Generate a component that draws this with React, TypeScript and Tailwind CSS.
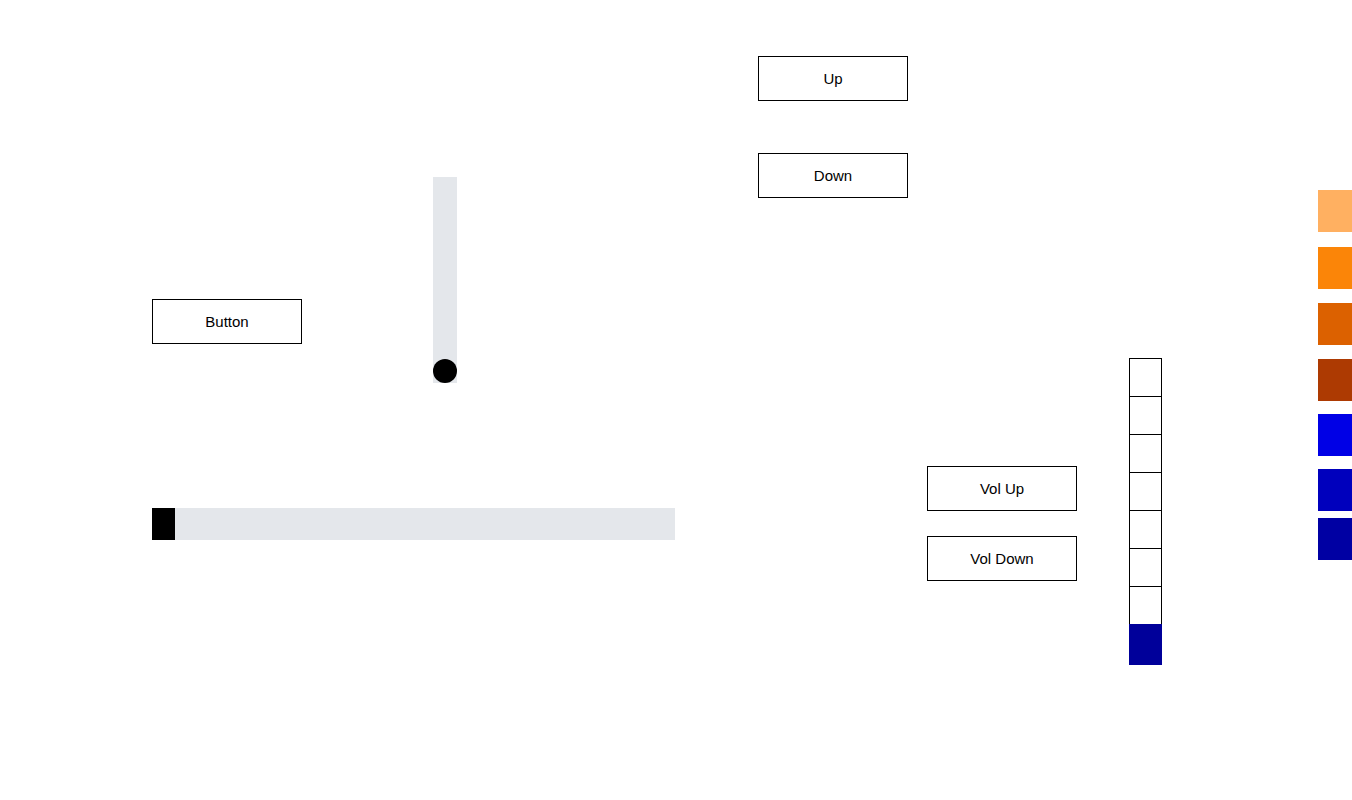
import React from "react";

const font = { fontFamily: '"Liberation Sans", Arial, sans-serif' };

function Btn({ label, className = "" }: { label: string; className?: string }) {
  return (
    <button
      className={`w-[150px] h-[45px] border border-black bg-white text-black text-[15px] flex items-center justify-center pt-[2px] shrink-0 ${className}`}
    >
      {label}
    </button>
  );
}

export default function App() {
  const swatches = [
    { c: "bg-[#ffb061]", mt: "mt-[190px]" },
    { c: "bg-[#fb8508]", mt: "mt-[15px]" },
    { c: "bg-[#dc6100]", mt: "mt-[14px]" },
    { c: "bg-[#ad3a02]", mt: "mt-[14px]" },
    { c: "bg-[#0000e6]", mt: "mt-[13px]" },
    { c: "bg-[#0000bd]", mt: "mt-[13px]" },
    { c: "bg-[#0000a3]", mt: "mt-[7px]" },
  ];
  return (
    <div className="w-[1352px] h-[800px] bg-white flex overflow-hidden" style={font}>
      {/* left block */}
      <div className="ml-[152px] w-[523px] flex flex-col pt-[177px] shrink-0">
        <div className="flex h-[206px]">
          <Btn label="Button" className="mt-[122px]" />
          <div className="ml-[131px] w-[24px] h-[206px] bg-[#e4e7eb] flex flex-col justify-end">
            <div className="w-[24px] h-[24px] rounded-full bg-black" />
          </div>
        </div>
        <div className="mt-[125px] w-[523px] h-[32px] bg-[#e4e7eb] flex">
          <div className="w-[23px] h-[32px] bg-black" />
        </div>
      </div>

      {/* up/down */}
      <div className="ml-[83px] flex flex-col pt-[56px] shrink-0">
        <Btn label="Up" />
        <Btn label="Down" className="mt-[52px]" />
      </div>

      {/* volume buttons */}
      <div className="ml-[19px] flex flex-col pt-[466px] shrink-0">
        <Btn label="Vol Up" />
        <Btn label="Vol Down" className="mt-[25px]" />
      </div>

      {/* volume stack */}
      <div className="ml-[52px] flex flex-col pt-[358px] shrink-0">
        {Array.from({ length: 7 }).map((_, i) => (
          <div key={i} className="w-[33px] h-[38px] border-x border-t border-black bg-white" />
        ))}
        <div className="w-[33px] h-[41px] bg-[#00009a]" />
      </div>

      {/* swatches */}
      <div className="ml-[156px] flex flex-col shrink-0">
        {swatches.map((s, i) => (
          <div key={i} className={`w-[34px] h-[42px] ${s.c} ${s.mt}`} />
        ))}
      </div>
    </div>
  );
}
